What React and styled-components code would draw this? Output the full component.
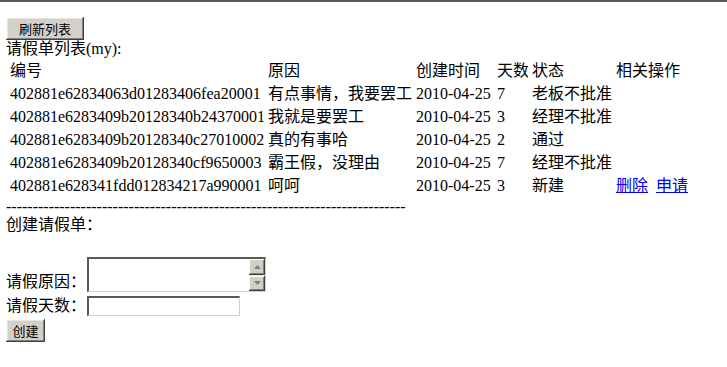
import React from "react";
import styled, {createGlobalStyle} from "styled-components";

const GlobalStyle = createGlobalStyle`
  html, body {
    margin: 0;
    padding: 0;
    background: #fff;
  }
  body {
    font-family: "Liberation Serif", "Noto Sans CJK SC", serif;
    font-size: 16px;
    line-height: 18px;
    color: #000;
  }
`;

const rows = [
    {id: "402881e62834063d01283406fea20001", reason: "有点事情，我要罢工", date: "2010-04-25", days: 7, status: "老板不批准"},
    {id: "402881e6283409b20128340b24370001", reason: "我就是要罢工", date: "2010-04-25", days: 3, status: "经理不批准"},
    {id: "402881e6283409b20128340c27010002", reason: "真的有事哈", date: "2010-04-25", days: 2, status: "通过"},
    {id: "402881e6283409b20128340cf9650003", reason: "霸王假，没理由", date: "2010-04-25", days: 7, status: "经理不批准"},
    {id: "402881e628341fdd012834217a990001", reason: "呵呵", date: "2010-04-25", days: 3, status: "新建", actions: true},
];

const colWidths = [256, 146, 79, 33, 82, 84];

function App() {
    return (
        <>
            <GlobalStyle/>
            <Page.Frame>
                <Page.Body>
                    <Page.Button $w={78}>刷新列表</Page.Button>
                    <Page.Line>请假单列表(my):</Page.Line>

                    <Page.Table $w={colWidths.reduce((a, b) => a + b, 0) + 2 * (colWidths.length + 1)}>
                        <colgroup>
                            {colWidths.map((w, i) => <col key={i} style={{width: w}}/>)}
                        </colgroup>
                        <thead>
                        <tr>
                            <Page.Cell as="th">编号</Page.Cell>
                            <Page.Cell as="th">原因</Page.Cell>
                            <Page.Cell as="th">创建时间</Page.Cell>
                            <Page.Cell as="th">天数</Page.Cell>
                            <Page.Cell as="th">状态</Page.Cell>
                            <Page.Cell as="th">相关操作</Page.Cell>
                        </tr>
                        </thead>
                        <tbody>
                        {rows.map((r) => (
                            <tr key={r.id}>
                                <Page.Cell>{r.id}</Page.Cell>
                                <Page.Cell>{r.reason}</Page.Cell>
                                <Page.Cell>{r.date}</Page.Cell>
                                <Page.Cell>{r.days}</Page.Cell>
                                <Page.Cell>{r.status}</Page.Cell>
                                <Page.Cell>
                                    {r.actions && (
                                        <>
                                            <Page.Link href="#">删除</Page.Link>
                                            <Page.Link href="#" $gap>申请</Page.Link>
                                        </>
                                    )}
                                </Page.Cell>
                            </tr>
                        ))}
                        </tbody>
                    </Page.Table>

                    <Page.Dashes>{"-".repeat(75)}</Page.Dashes>
                    <Page.Line>创建请假单：</Page.Line>

                    <Page.FormRow $top={23}>
                        <Page.Label>请假原因：</Page.Label>
                        <Page.TextArea>
                            <Page.TextBody/>
                            <Page.ScrollBar>
                                <Page.ScrollBtn>
                                    <svg width="7" height="4" viewBox="0 0 7 4"><path d="M3.5 0L7 4H0z" fill="#808080"/></svg>
                                </Page.ScrollBtn>
                                <Page.ScrollBtn>
                                    <svg width="7" height="4" viewBox="0 0 7 4"><path d="M0 0h7L3.5 4z" fill="#808080"/></svg>
                                </Page.ScrollBtn>
                            </Page.ScrollBar>
                        </Page.TextArea>
                    </Page.FormRow>

                    <Page.FormRow $top={4}>
                        <Page.Label>请假天数：</Page.Label>
                        <Page.Input/>
                    </Page.FormRow>

                    <Page.Button $w={39} $top={3}>创建</Page.Button>
                </Page.Body>
            </Page.Frame>
        </>
    );
}

const Page = {
    Frame: styled.div`
        border-top: 2px solid #5c5c5c;
        min-height: 365px;
    `,

    Body: styled.div`
        padding: 15px 6px 0 6px;
    `,

    Button: styled.div`
        box-sizing: border-box;
        width: ${p => p.$w}px;
        height: 23px;
        margin-top: ${p => p.$top || 0}px;
        display: flex;
        justify-content: center;
        align-items: center;
        background: #d4d0c8;
        font-family: "Noto Sans CJK SC", sans-serif;
        font-size: 13px;
        line-height: 13px;
        color: #000;
        box-shadow: inset -1px -1px #404040, inset 1px 1px #ffffff,
                    inset -2px -2px #808080, inset 2px 2px #e8e6e0;
    `,

    Line: styled.div`
        height: 18px;
        line-height: 18px;
        white-space: nowrap;
    `,

    Table: styled.table`
        table-layout: fixed;
        border-collapse: separate;
        border-spacing: 2px;
        width: ${p => p.$w}px;
    `,

    Cell: styled.td`
        height: 21px;
        padding: 0 2px;
        text-align: left;
        font-weight: normal;
        vertical-align: middle;
        white-space: nowrap;
        overflow: hidden;
        line-height: 18px;
    `,

    Link: styled.a`
        color: #0000ee;
        text-decoration: underline;
        margin-left: ${p => p.$gap ? 8 : 0}px;
    `,

    Dashes: styled.div`
        height: 18px;
        line-height: 18px;
        font-family: "Liberation Serif", serif;
        white-space: nowrap;
        overflow: hidden;
    `,

    FormRow: styled.div`
        display: flex;
        align-items: flex-end;
        margin-top: ${p => p.$top}px;
    `,

    Label: styled.span`
        width: 81px;
        line-height: 18px;
        white-space: nowrap;
        padding-bottom: 1px;
    `,

    TextArea: styled.div`
        box-sizing: border-box;
        display: flex;
        width: 179px;
        height: 35px;
        border-top: 2px solid #5a5a5a;
        border-left: 2px solid #5a5a5a;
        border-right: 1px solid #d4d0c8;
        border-bottom: 1px solid #d4d0c8;
        background: #fff;
    `,

    TextBody: styled.div`
        flex: 1;
    `,

    ScrollBar: styled.div`
        display: flex;
        flex-direction: column;
        gap: 1px;
        width: 16px;
        background: #ece9e2;
    `,

    ScrollBtn: styled.div`
        box-sizing: border-box;
        height: 16px;
        display: flex;
        justify-content: center;
        align-items: center;
        background: #d4d0c8;
        box-shadow: inset -1px -1px #404040, inset 1px 1px #ffffff,
                    inset -2px -2px #808080;
    `,

    Input: styled.div`
        box-sizing: border-box;
        width: 153px;
        height: 20px;
        border-top: 2px solid #5a5a5a;
        border-left: 2px solid #5a5a5a;
        border-right: 1px solid #d4d0c8;
        border-bottom: 1px solid #d4d0c8;
        background: #fff;
    `,
};

export default App;
